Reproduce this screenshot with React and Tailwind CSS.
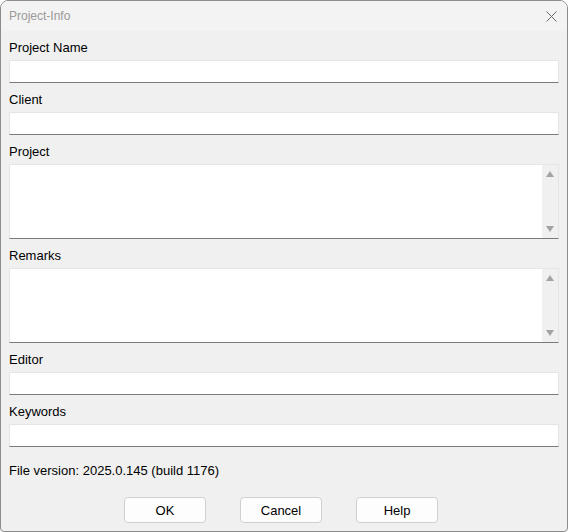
import React from 'react'

const font = { fontFamily: '"Liberation Sans", Arial, sans-serif' }

const Label = ({ children }) => (
	<div className="h-[18px] pt-[1px] leading-[17px] text-[13px] text-[#000] mb-[4px]">{children}</div>
)

const TextField = ({ label }) => (
	<div className="flex flex-col">
		<Label>{label}</Label>
		<div className="h-[23px] bg-white border border-[#e5e5e5] border-b-[#7a7a7a]" />
	</div>
)

const MemoField = ({ label }) => (
	<div className="flex flex-col">
		<Label>{label}</Label>
		<div className="h-[75px] flex bg-white border border-[#e5e5e5] border-b-[#7a7a7a]">
			<div className="flex-1" />
			<div className="w-[16px] bg-[#f0f0f0] flex flex-col items-center justify-between py-[6px]">
				<svg width="8" height="6" viewBox="0 0 8 6"><polygon points="4,0 8,6 0,6" fill="#a3a3a3" /></svg>
				<svg width="8" height="6" viewBox="0 0 8 6"><polygon points="0,0 8,0 4,6" fill="#a3a3a3" /></svg>
			</div>
		</div>
	</div>
)

const Button = ({ children }) => (
	<button className="w-[82px] h-[26px] pt-[1px] bg-[#fdfdfd] border border-[#d0d0d0] rounded-[4px] text-[13px] text-[#000]">
		{children}
	</button>
)

export default function App() {
	return (
		<div style={font} className="w-[568px] h-[532px] bg-white">
			<div className="w-full h-full flex flex-col border border-[#8c8c8c] rounded-t-[8px] rounded-b-[4px] overflow-hidden bg-[#f0f0f0]">
				<div className="h-[30px] shrink-0 bg-[#f3f3f3] flex items-center justify-between pl-[8px] pr-[10px]">
					<span className="text-[12px] text-[#9a9a9a]">Project-Info</span>
					<svg width="11" height="11" viewBox="0 0 11 11">
						<path d="M0.5 0.5 L10.5 10.5 M10.5 0.5 L0.5 10.5" stroke="#6a6a6a" strokeWidth="1" />
					</svg>
				</div>
				<div className="flex flex-col px-[8px] pt-[7px] gap-[7px]">
					<TextField label="Project Name" />
					<TextField label="Client" />
					<MemoField label="Project" />
					<MemoField label="Remarks" />
					<TextField label="Editor" />
					<TextField label="Keywords" />
				</div>
				<div className="px-[8px] mt-[14px] h-[18px] pt-[1px] leading-[17px] text-[13px] text-[#000]">
					File version: 2025.0.145 (build 1176)
				</div>
				<div className="flex gap-[34px] mt-[18px] pl-[123px]">
					<Button>OK</Button>
					<Button>Cancel</Button>
					<Button>Help</Button>
				</div>
			</div>
		</div>
	)
}
